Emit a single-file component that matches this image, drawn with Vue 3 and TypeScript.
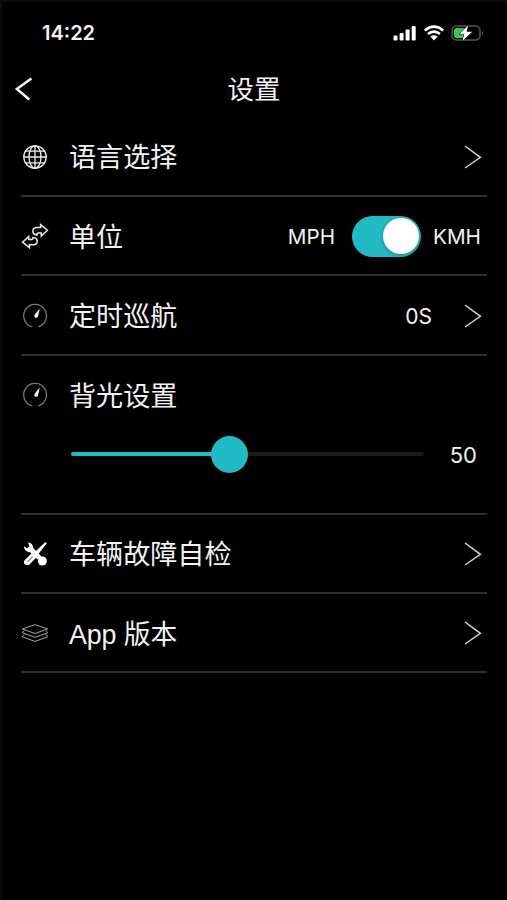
<script setup lang="ts">
import { computed, ref } from 'vue'

type IconName = 'globe' | 'swap' | 'gauge' | 'tools' | 'layers'
type Control = 'link' | 'unit' | 'slider'

interface SettingRow {
  id: string
  label: string
  icon: IconName
  control: Control
  value?: string
}

const rows: SettingRow[] = [
  { id: 'language', label: '语言选择', icon: 'globe', control: 'link' },
  { id: 'unit', label: '单位', icon: 'swap', control: 'unit' },
  { id: 'cruise', label: '定时巡航', icon: 'gauge', control: 'link', value: '0S' },
  { id: 'backlight', label: '背光设置', icon: 'gauge', control: 'slider' },
  { id: 'diagnosis', label: '车辆故障自检', icon: 'tools', control: 'link' },
  { id: 'version', label: 'App 版本', icon: 'layers', control: 'link' },
]

const metric = ref(true)
const brightness = ref(50)
const minBrightness = 10
const maxBrightness = 100
const fill = computed(
  () => `${((brightness.value - minBrightness) / (maxBrightness - minBrightness)) * 100}%`,
)
</script>

<template>
  <main class="screen">
    <div class="status">
      <span class="clock">14:22</span>
      <div class="indicators">
        <svg class="signal" viewBox="0 0 24 16">
          <rect x="0.5" y="10.5" width="4" height="5" rx="1" />
          <rect x="6.6" y="8" width="4" height="7.5" rx="1" />
          <rect x="12.6" y="4.5" width="4" height="11" rx="1" />
          <rect x="18.7" y="1" width="4" height="14.5" rx="1" />
        </svg>
        <svg class="wifi" viewBox="0 0 22 16">
          <path d="M1.8 5.4Q11 -2.2 20.2 5.4M5 9Q11 4.2 17 9" />
          <path class="solid" d="M7.4 11.6Q11 8.9 14.6 11.6L11 15.4Z" />
        </svg>
        <svg class="battery" viewBox="0 0 34 18">
          <rect class="shell" x="1" y="2" width="28" height="14" rx="4.5" />
          <path class="tip" d="M31 6.4Q33.2 9 31 11.6Z" />
          <rect class="charge" x="3" y="4" width="12" height="10" rx="2.5" />
          <path class="bolt" d="M17.2 1.2L8 10.3H13.2L11.4 17L21.2 7.7H15.6Z" />
        </svg>
      </div>
    </div>

    <header class="navbar">
      <button class="back" type="button" aria-label="返回">
        <svg viewBox="0 0 18 24"><path d="M16.4 1.5L1.8 12L14.2 22.5" /></svg>
      </button>
      <h1>设置</h1>
    </header>

    <section class="list">
      <article v-for="row in rows" :key="row.id" class="row" :class="row.control">
        <div class="line">
          <svg class="icon" :class="row.icon" viewBox="0 0 28 28">
            <template v-if="row.icon === 'globe'">
              <circle cx="14" cy="14" r="11.2" />
              <ellipse cx="14" cy="14" rx="6" ry="11.2" />
              <path d="M14 2.8V25.2M2.8 14H25.2M4.7 8.2H23.3M4.7 19.8H23.3" />
            </template>
            <template v-else-if="row.icon === 'swap'">
              <path d="M19.6 2.6L26.4 8.3L20.3 14V11H17.2Q15.6 11.2 16 12.9Q12 12.6 11.8 9.4Q11.8 5.8 15.4 5.6H19.6Z" />
              <path d="M8.4 25.8L1.6 20.1L7.7 14.4V17.4H10.8Q12.4 17.2 12 15.5Q16 15.8 16.2 19Q16.2 22.6 12.6 22.8H8.4Z" />
            </template>
            <template v-else-if="row.icon === 'gauge'">
              <path class="dial" d="M11.3 24.9A11.4 11.4 0 1 1 17.3 24.8" />
              <path class="needle" d="M18.8 6.5L16.9 14.8Q15.3 16.7 13.7 15.2Q12.8 13.8 13.8 12.6Z" />
            </template>
            <template v-else-if="row.icon === 'tools'">
              <path class="handle" d="M24.4 2L25.8 3.3L17.4 14L14.4 11.4Z" />
              <path class="handle" d="M2.8 6.3L6.2 8.2L8.4 6.4L7 2.5Q11.9 2.6 12.2 8L20.5 16.6L16.6 19.4L9 12.2Q3.4 11.9 2.8 6.3Z" />
              <path class="handle" d="M11.5 12.6L15.8 17L8.2 24.8Q4.9 26.3 3.1 23.6Q2.2 21.4 3.9 20Z" />
              <path class="slot" d="M11.6 16.8L6.5 21.9" />
              <circle class="handle" cx="21.4" cy="21" r="4.5" />
            </template>
            <template v-else>
              <path d="M14 5.6L26.6 10L14 14.5L1.4 10Z" />
              <path d="M3.4 11.6L1.4 13.2V13.8L14 18.3L26.6 13.8V13.2L24.6 11.6" />
              <path d="M3.4 15.6L1.4 17.2V17.8L14 22.4L26.6 17.8V17.2L24.6 15.6" />
            </template>
          </svg>
          <span class="label" :lang="row.id === 'version' ? 'en' : 'zh'">{{ row.label }}</span>

          <div v-if="row.control === 'unit'" class="units">
            <span>MPH</span>
            <button
              class="toggle"
              :class="{ on: metric }"
              type="button"
              role="switch"
              :aria-checked="metric"
              @click="metric = !metric"
            >
              <i class="knob"></i>
            </button>
            <span>KMH</span>
          </div>
          <template v-else-if="row.control === 'link'">
            <span v-if="row.value" class="value">{{ row.value }}</span>
            <svg class="chevron" viewBox="0 0 18 24"><path d="M1 1L16.4 12.3L1 23" /></svg>
          </template>
        </div>

        <div v-if="row.control === 'slider'" class="adjust">
          <div class="track">
            <div class="filled" :style="{ width: fill }"></div>
            <i class="thumb"></i>
          </div>
          <span class="amount">{{ brightness }}</span>
        </div>
      </article>
    </section>
  </main>
</template>

<style>
body {
  background: #000;
}
</style>

<style scoped>
.screen {
  box-sizing: border-box;
  height: 900px;
  border-top: 2px solid #0c0c0c;
  border-left: 2px solid #0c0c0c;
  border-right: 1px solid #080808;
  background: #000;
  color: #f2f2f2;
  font-family: Inter, "Noto Sans CJK SC", sans-serif;
}

svg {
  display: block;
  flex: none;
  fill: none;
}

button {
  padding: 0;
  border: 0;
  background: none;
}

.status {
  display: flex;
  align-items: center;
  justify-content: space-between;
  height: 61px;
  padding: 0 21px 0 40px;
}

.clock {
  font-size: 20px;
  font-weight: 600;
  line-height: 24px;
}

.indicators {
  display: flex;
  align-items: center;
  gap: 6px;
}

.signal {
  width: 24px;
  height: 16px;
  fill: #fff;
}

.wifi {
  width: 22px;
  height: 16px;
  stroke: #fff;
  stroke-width: 2.6;
}

.wifi .solid {
  fill: #fff;
  stroke: none;
}

.battery {
  width: 34px;
  height: 18px;
}

.shell {
  stroke: #555;
  stroke-width: 1.5;
}

.tip {
  fill: #555;
}

.charge {
  fill: #34c759;
}

.bolt {
  fill: #fff;
  stroke: #000;
  stroke-width: 1;
  paint-order: stroke;
}

.navbar {
  display: grid;
  grid-template-columns: 60px 1fr 60px;
  align-items: center;
  height: 52px;
  margin-bottom: 2.6px;
}

.back {
  padding-left: 13px;
}

.back svg {
  width: 18px;
  height: 24px;
  stroke: #fff;
  stroke-width: 2.5;
}

h1 {
  margin: 0;
  font-size: 26.5px;
  font-weight: 400;
  line-height: 40px;
  text-align: center;
}

.list {
  padding: 0 19px 0 19px;
}

.row {
  box-sizing: border-box;
  height: 79.4px;
  border-bottom: 2px solid #303030;
}

.row.slider {
  height: 158.8px;
}

.line {
  display: flex;
  align-items: center;
  height: 78.6px;
  padding-right: 5px;
}

.icon {
  width: 28px;
  height: 28px;
  margin-right: 20px;
  stroke: #ededed;
  stroke-width: 1.3;
}

.swap {
  stroke-width: 1.5;
}

.dial {
  stroke: #777;
}

.needle,
.handle {
  fill: #fff;
  stroke: none;
}

.slot {
  stroke: #888;
}

.layers {
  stroke: #b5b5b5;
  stroke-width: 0.9;
}

.label {
  flex: 1;
  padding-top: 3px;
  font-size: 27.1px;
  line-height: 40px;
  white-space: nowrap;
}

.label:lang(en) {
  font-family: "Liberation Sans", "Noto Sans CJK SC", sans-serif;
  font-size: 26.8px;
  letter-spacing: -0.1px;
}

.units {
  display: flex;
  align-items: center;
  margin-right: 1px;
  font-size: 20.7px;
}

.toggle {
  box-sizing: border-box;
  display: flex;
  width: 69px;
  height: 41px;
  margin: 0 12px 0 17px;
  padding: 2.5px;
  border-radius: 21px;
  background: #454545;
}

.toggle.on {
  justify-content: flex-end;
  background: #22bbc5;
}

.knob {
  width: 36px;
  height: 36px;
  border-radius: 50%;
  background: #fff;
  box-shadow: 0 1px 4px rgba(0, 0, 0, 0.3);
}

.value {
  margin-right: 32px;
  padding-top: 1px;
  font-size: 21px;
}

.chevron {
  width: 18px;
  height: 24px;
  stroke: #d5d5d5;
  stroke-width: 1.5;
}

.adjust {
  display: flex;
  align-items: center;
  justify-content: space-between;
  height: 39.6px;
  padding: 0 10px 0 50px;
}

.track {
  display: flex;
  align-items: center;
  width: 353px;
  height: 4px;
  border-radius: 2px;
  background: #1a1a1a;
}

.filled {
  height: 4px;
  border-radius: 2px;
  background: #22bbc5;
}

.thumb {
  flex: none;
  width: 37px;
  height: 37px;
  margin-left: -17px;
  border-radius: 50%;
  background: #22bbc5;
}

.amount {
  padding-top: 1px;
  font-size: 22px;
}
</style>
